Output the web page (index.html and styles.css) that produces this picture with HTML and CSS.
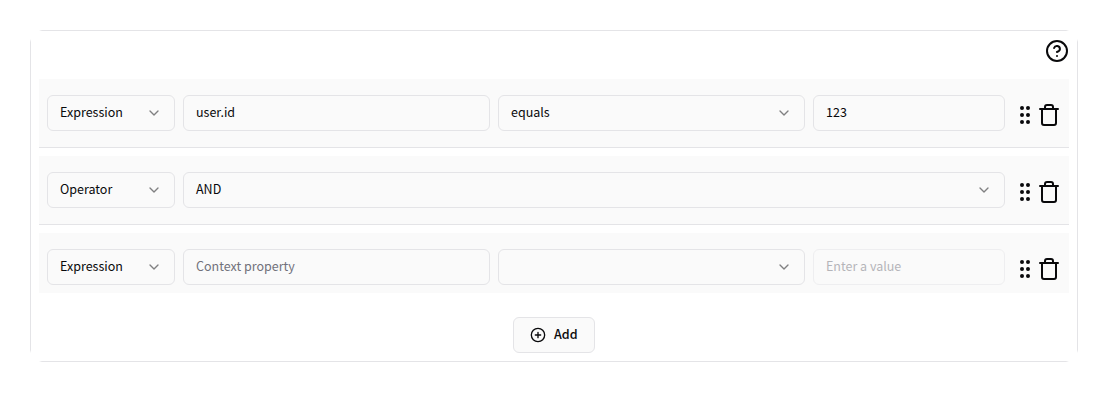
FILE: index.html
```html
<!DOCTYPE html>
<html lang="en">
<head>
<meta charset="utf-8">
<title>Rule editor</title>
<link rel="stylesheet" href="styles.css">
</head>
<body>
<svg class="defs" aria-hidden="true">
  <symbol id="chevron" viewBox="0 0 24 24"><path d="m6 9 6 6 6-6"/></symbol>
  <symbol id="grip" viewBox="0 0 24 24"><circle cx="9" cy="12" r="1"/><circle cx="9" cy="5" r="1"/><circle cx="9" cy="19" r="1"/><circle cx="15" cy="12" r="1"/><circle cx="15" cy="5" r="1"/><circle cx="15" cy="19" r="1"/></symbol>
  <symbol id="trash" viewBox="0 0 24 24"><path d="M3 6h18"/><path d="M19 6v14c0 1-1 2-2 2H7c-1 0-2-1-2-2V6"/><path d="M8 6V4c0-1 1-2 2-2h4c1 0 2 1 2 2v2"/></symbol>
</svg>
<main class="panel">
  <header class="panel-header">
    <svg class="icon" viewBox="0 0 24 24"><circle cx="12" cy="12" r="10"/><path d="M9.09 9a3 3 0 0 1 5.83 1c0 2-3 3-3 3"/><path d="M12 17h.01"/></svg>
  </header>
  <div class="rules">
    <div class="rule">
      <div class="field kind"><span>Expression</span><svg class="chevron"><use href="#chevron"/></svg></div>
      <div class="field grow"><span>user.id</span></div>
      <div class="field grow"><span>equals</span><svg class="chevron"><use href="#chevron"/></svg></div>
      <div class="field value"><span>123</span></div>
      <div class="actions"><svg class="icon"><use href="#grip"/></svg><svg class="icon"><use href="#trash"/></svg></div>
    </div>
    <div class="rule">
      <div class="field kind"><span>Operator</span><svg class="chevron"><use href="#chevron"/></svg></div>
      <div class="field grow"><span>AND</span><svg class="chevron"><use href="#chevron"/></svg></div>
      <div class="actions"><svg class="icon"><use href="#grip"/></svg><svg class="icon"><use href="#trash"/></svg></div>
    </div>
    <div class="rule">
      <div class="field kind"><span>Expression</span><svg class="chevron"><use href="#chevron"/></svg></div>
      <div class="field grow placeholder"><span>Context property</span></div>
      <div class="field grow"><span></span><svg class="chevron"><use href="#chevron"/></svg></div>
      <div class="field value placeholder disabled"><span>Enter a value</span></div>
      <div class="actions"><svg class="icon"><use href="#grip"/></svg><svg class="icon"><use href="#trash"/></svg></div>
    </div>
  </div>
  <footer class="panel-footer">
    <button class="add" type="button"><svg class="icon add-icon" viewBox="0 0 24 24"><circle cx="12" cy="12" r="10"/><path d="M8 12h8M12 8v8"/></svg><span>Add</span></button>
  </footer>
</main>
</body>
</html>
```
FILE: styles.css
```css
* { box-sizing: border-box; }

body {
  margin: 0;
  padding: 30px 42px 0 30px;
  background: #fff;
  color: #09090b;
  font: 400 12.5px/20px "Noto Sans CJK SC", "Noto Sans", sans-serif;
}

.defs { display: none; }

/* Frame edges stop short of the corners and fade at their ends. */
.panel {
  --stops: transparent, #e4e4e7 3px, #e4e4e7 calc(100% - 3px), transparent;
  padding: 9px;
  height: 332px;
  background:
    linear-gradient(90deg, var(--stops)) center top / calc(100% - 18px) 1px no-repeat,
    linear-gradient(90deg, var(--stops)) center bottom / calc(100% - 18px) 1px no-repeat,
    linear-gradient(var(--stops)) left center / 1px calc(100% - 18px) no-repeat,
    linear-gradient(var(--stops)) right center / 1px calc(100% - 18px) no-repeat;
}

.panel-header {
  display: flex;
  justify-content: flex-end;
  height: 40px;
}

.icon {
  display: block;
  flex: none;
  width: 24px;
  height: 24px;
  fill: none;
  stroke: currentColor;
  stroke-width: 2;
  stroke-linecap: round;
  stroke-linejoin: round;
}

.rules {
  display: flex;
  flex-direction: column;
  gap: 8px;
}

.rule {
  display: flex;
  gap: 8px;
  padding: 16px 8px;
  background: #fafafa;
  border-bottom: 1px solid #e4e4e7;
}

.rule:last-child {
  padding-bottom: 8px;
  border-bottom: 0;
}

.field {
  display: flex;
  align-items: center;
  justify-content: space-between;
  height: 36px;
  padding: 0 12px;
  border: 1px solid #e4e4e7;
  border-radius: 6px;
  white-space: nowrap;
}

.field span,
.add span { padding-bottom: 2px; }

.kind { width: 128px; }
.grow { flex: 1 1 0; }
.value { width: 192px; }
.placeholder { color: #71717a; }
.disabled { opacity: 0.5; }

.chevron {
  width: 16px;
  height: 16px;
  fill: none;
  stroke: currentColor;
  stroke-width: 2;
  stroke-linecap: round;
  stroke-linejoin: round;
  opacity: 0.5;
}

.actions {
  display: flex;
  padding-top: 8px;
}

.panel-footer {
  display: flex;
  justify-content: center;
  padding-top: 24px;
}

.add {
  display: flex;
  align-items: center;
  gap: 8px;
  width: 82px;
  height: 36px;
  padding: 0 16px;
  background: #fafafa;
  border: 1px solid #e4e4e7;
  border-radius: 6px;
  color: inherit;
  font: inherit;
  font-weight: 500;
}

.add-icon {
  width: 16px;
  height: 16px;
}
```
